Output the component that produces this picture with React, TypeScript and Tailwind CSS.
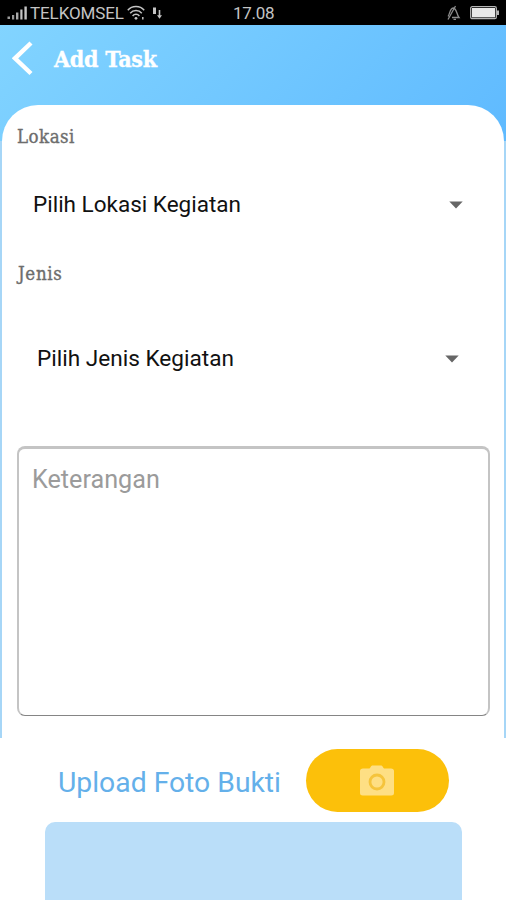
import React from 'react';

const StatusBar: React.FC = () => (
  <div className="flex h-[25px] items-center bg-black pl-[7px] pr-[6px] text-[#c4c4c4]">
    <svg width="21" height="25" viewBox="0 0 21 25" fill="currentColor">
      <rect x="0.5" y="16.5" width="2.5" height="2.5" fill="#999999" />
      <rect x="5" y="15" width="2.2" height="4.5" fill="#999999" />
      <rect x="9" y="12.5" width="2.4" height="7" fill="#aaaaaa" />
      <rect x="13.3" y="9.5" width="2.2" height="10" />
      <rect x="17.4" y="6.5" width="2.4" height="13" />
    </svg>
    <span className="ml-[2px] w-[97px] whitespace-nowrap pt-[2px] text-[17px] leading-[25px] tracking-[-0.1px]">TELKOMSEL</span>
    <svg width="18" height="25" viewBox="0 0 18 25" fill="none" stroke="currentColor" strokeWidth="1.5">
      <path d="M0.8 10.2C5 5.2 13 5.2 17.2 10.2" />
      <path d="M3.2 13.2C6.2 9.6 11.8 9.6 14.8 13.2" />
      <path d="M5.6 16C7.4 13.8 10.6 13.8 12.4 16" />
      <circle cx="9" cy="18.3" r="1.4" fill="currentColor" stroke="none" />
      <path d="M15.8 17v2.5" />
    </svg>
    <svg className="ml-[7px]" width="10" height="25" viewBox="0 0 10 25" fill="currentColor">
      <rect x="1" y="7.5" width="3" height="6.5" />
      <path d="M6.7 10v5.300H5L7.5 18.8l2.5-3.5H8.3V10z" />
    </svg>
    <span className="ml-[71px] w-[44px] pt-[2px] text-[17px] leading-[25px] tracking-[-0.3px]">17.08</span>
    <svg className="ml-auto" width="15" height="25" viewBox="0 0 15 25" fill="none" stroke="#8b8b8b" strokeWidth="1.3">
      <path d="M2 16.5C4 14.5 3.5 8.5 7.2 8C10.9 8.5 10.5 14.5 13 17.5H6" />
      <path d="M9.5 6L2 19.5M7.5 19.3h2.5" />
    </svg>
    <svg className="ml-[9px]" width="30" height="25" viewBox="0 0 30 25">
      <rect x="0.7" y="6.7" width="25.6" height="12" rx="1.5" fill="none" stroke="#b5b5b5" strokeWidth="1.3" />
      <rect x="2" y="8" width="23" height="9.4" fill="#e8e8e8" />
      <rect x="27" y="10.5" width="2" height="4.5" fill="#b5b5b5" />
    </svg>
  </div>
);

const Caret: React.FC = () => (
  <svg className="-mt-px" width="14" height="8" viewBox="0 0 14 8" fill="#666666">
    <path d="M0.3 0.5h13.4L7 7.5z" />
  </svg>
);

const App: React.FC = () => {
  return (
    <div className="h-[900px] w-full overflow-hidden bg-white font-['Roboto',sans-serif]">
      <StatusBar />

      {/* Gradient covers the header and the card corners, the rest is the pale edge */}
      <div className="flex h-[713px] flex-col bg-[#a6d6f7] bg-[linear-gradient(135deg,#82d4ff_0%,#5fbaff_100%)] bg-[length:100%_116px] bg-no-repeat">
        <header className="flex h-20 shrink-0 items-start pl-3 pt-4">
          <svg width="22" height="36" viewBox="0 0 22 36" fill="none" stroke="#ffffff" strokeWidth="4.4">
            <path d="M19 2L3 17.3L19 32.5" />
          </svg>
          <h1 className="ml-5 whitespace-nowrap font-['DejaVu_Serif_Condensed','DejaVu_Serif',serif] text-[23px] font-bold leading-9 tracking-[-0.25px] text-white [-webkit-text-stroke:0.3px_white]">
            Add Task
          </h1>
        </header>

        {/* Form card */}
        <main className="ml-[2px] mr-[2px] flex grow flex-col rounded-t-[36px] bg-white px-[15px] pt-5">
          <label className="h-6 font-['DejaVu_Serif_Condensed','DejaVu_Serif',serif] text-[18.5px] leading-6 tracking-[0.5px] text-[#6d6d6d] [-webkit-text-stroke:0.35px_#6d6d6d]">Lokasi</label>
          <button className="mt-[31px] flex h-[50px] items-center justify-between pl-4 pr-[26px] text-[22.5px] text-[#111111]">
            <span>Pilih Lokasi Kegiatan</span>
            <Caret />
          </button>
          <label className="mt-8 h-6 pl-px font-['DejaVu_Serif_Condensed','DejaVu_Serif',serif] text-[18.5px] leading-6 tracking-[0.7px] text-[#6d6d6d] [-webkit-text-stroke:0.35px_#6d6d6d]">Jenis</label>
          <button className="mt-12 flex h-[50px] items-center justify-between pl-5 pr-[30px] text-[22.6px] text-[#111111]">
            <span>Pilih Jenis Kegiatan</span>
            <Caret />
          </button>
          <textarea
            className="mt-[62px] h-[270px] w-[473px] resize-none rounded-lg border-x-2 border-t-[3px] border-b border-x-[#c4c4c4] border-t-[#c4c4c4] border-b-[#858585] px-[13px] pt-[15px] text-[25.2px] leading-8 outline-none placeholder:text-[#9b9b9b]"
            placeholder="Keterangan"
          />
        </main>
      </div>

      {/* Photo upload */}
      <section className="flex h-[84px] items-start pl-[58px] pt-[11px]">
        <span className="w-[248px] whitespace-nowrap text-[28.3px] leading-[68px] text-[#64b0ea]">Upload Foto Bukti</span>
        <button className="flex h-[63px] w-[143px] items-center justify-center rounded-full bg-[#fcc00a] pb-px pr-px">
          <svg width="34" height="31" viewBox="0 0 34 31">
            <path d="M10.5 2.2C11 1 11.5 0.5 13 0.5H20.5C22 0.5 22.5 1 23 2.2L24 3.5H31C32.8 3.5 34 4.5 34 6V28C34 29.7 33 30.5 31.3 30.5H2.7C1 30.5 0 29.7 0 28V6C0 4.5 1.2 3.5 3 3.5H9.5Z" fill="#fedf84" />
            <circle cx="17" cy="17" r="7" fill="none" stroke="#f5c43c" strokeWidth="2.8" />
          </svg>
        </button>
      </section>
      <div className="ml-[45px] h-[78px] w-[417px] rounded-t-[10px] bg-[#badef9]" />
    </div>
  );
};

export default App;
